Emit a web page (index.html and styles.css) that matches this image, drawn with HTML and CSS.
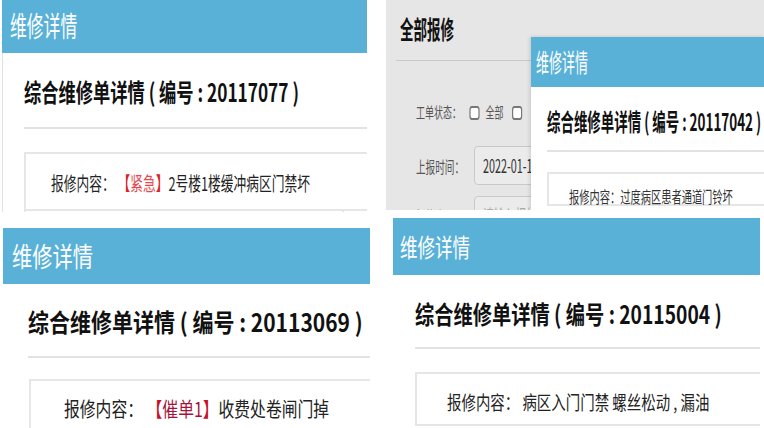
FILE: index.html
```html
<!DOCTYPE html>
<html lang="zh-CN">
<head>
    <meta charset="UTF-8">
    <title>维修详情</title>
    <link rel="stylesheet" href="styles.css">
</head>
<body>
    <div class="collage">
        <!-- top left -->
        <section class="shot shot-a">
            <header class="shot-head"><span class="sq">维修详情</span></header>
            <div class="shot-body">
                <h2 class="order-title"><span class="sq">综合维修单详情 ( 编号 : 20117077 )</span></h2>
                <div class="detail-box">
                    <div class="detail-row"><span class="sq">报修内容： <span class="tag">【<b>紧急</b>】</span>2号楼1楼缓冲病区门禁坏</span></div>
                    <div class="detail-row split"><div class="cell"></div></div>
                </div>
            </div>
        </section>

        <!-- top right -->
        <section class="shot shot-b">
            <h2 class="list-title"><span class="sq">全部报修</span></h2>
            <div class="filters">
                <div class="filter-row">
                    <span class="sq">工单状态：<i class="check"></i>全部<i class="check"></i></span>
                </div>
                <div class="filter-row">
                    <span class="filter-label"><span class="sq">上报时间：</span></span>
                    <div class="field"><span class="sq">2022-01-1</span></div>
                </div>
                <div class="filter-row">
                    <span class="filter-label"><span class="sq">报修人：</span></span>
                    <div class="field"><span class="sq faint">请输入报修人</span></div>
                </div>
            </div>

            <div class="dialog">
                <header class="shot-head"><span class="sq">维修详情</span></header>
                <div class="shot-body">
                    <h2 class="order-title"><span class="sq">综合维修单详情 ( 编号 : 20117042 )</span></h2>
                    <div class="detail-box">
                        <div class="detail-row"><span class="sq">报修内容：过度病区患者通道门铃坏</span></div>
                    </div>
                </div>
            </div>
        </section>

        <!-- bottom left -->
        <section class="shot shot-c">
            <header class="shot-head"><span class="sq">维修详情</span></header>
            <div class="shot-body">
                <h2 class="order-title"><span class="sq">综合维修单详情 ( 编号 : 20113069 )</span></h2>
                <div class="detail-box">
                    <div class="detail-row"><span class="sq">报修内容： <span class="tag">【<b>催单1</b>】</span>收费处卷闸门掉</span></div>
                </div>
            </div>
        </section>

        <!-- bottom right -->
        <section class="shot shot-d">
            <header class="shot-head"><span class="sq">维修详情</span></header>
            <div class="shot-body">
                <h2 class="order-title"><span class="sq">综合维修单详情 ( 编号 : 20115004 )</span></h2>
                <div class="detail-box">
                    <div class="detail-row"><span class="sq">报修内容： 病区入门门禁 螺丝松动 , 漏油</span></div>
                </div>
            </div>
        </section>
    </div>
</body>
</html>
```

FILE: styles.css
```css
body {
    margin: 0;
    background-color: #fff;
    font-family: "Noto Sans CJK SC", "Noto Sans", sans-serif;
    color: #222;
}

.collage {
    display: grid;
    grid-template-columns: 386px 378px;
    grid-template-rows: 218px 210px;
    width: 764px;
    height: 428px;
    overflow: hidden;
}

/* the screenshots are squashed sideways, so text is squeezed too */
.sq {
    display: inline-block;
    white-space: nowrap;
    transform: scaleX(var(--sx, 1));
    transform-origin: 0 50%;
}

.shot {
    position: relative;
    overflow: hidden;
    background-color: #fff;
}

.shot-head {
    background-color: #5ab1d8;
    color: #fff;
    line-height: 1;
    box-sizing: border-box;
}

.shot-body {
    box-sizing: border-box;
}

.order-title {
    margin: 0;
    line-height: 1;
    font-weight: bold;
    color: #111;
    border-bottom: 2px solid #e2e2e2;
}

.detail-box {
    border: 2px solid #e6e6e6;
    border-right: none;
}

.detail-row {
    line-height: 1;
}

.tag {
    color: #d8232a;
}

.tag b {
    font-weight: normal;
    color: #e5484d;
}

/* top left */
.shot-a {
    width: 365px;
    height: 212px;
    margin-left: 2px;
}

.shot-a .shot-head {
    height: 53px;
    padding: 11px 0 0 8px;
    font-size: 28px;
    --sx: 0.6;
}

.shot-a .shot-body {
    height: 159px;
    padding: 26px 0 0 21px;
    border-left: 1px solid #e2e2e2;
    --sx: 0.67;
}

.shot-a .order-title {
    font-size: 25px;
    padding-bottom: 23px;
    --sx: 0.69;
}

.shot-a .detail-box {
    margin-top: 23px;
}

.shot-a .detail-row {
    height: 55px;
    box-sizing: border-box;
    padding: 19px 0 0 25px;
    font-size: 19px;
}

.shot-a .split {
    height: 20px;
    padding: 0;
    border-top: 2px solid #e6e6e6;
}

.shot-a .split .cell {
    width: 316px;
    height: 100%;
    border-right: 2px solid #e6e6e6;
}

/* top right: list page with dialog on top */
.shot-b {
    width: 378px;
    height: 210px;
    background-color: #e6e6e6;
    --sx: 0.54;
}

.list-title {
    margin: 0 0 0 10px;
    padding: 16px 0 19px 4px;
    font-size: 25px;
    line-height: 1;
    color: #111;
    border-bottom: 1px solid #c9c9c9;
}

.filters {
    margin-top: 41px;
    padding-left: 30px;
    color: #555;
    font-size: 15px;
    --sx: 0.6;
}

.filter-row {
    display: flex;
    align-items: center;
    height: 20px;
    line-height: 1;
}

.filter-row + .filter-row {
    height: 39px;
    margin-top: 24px;
}

.filter-row + .filter-row + .filter-row {
    margin-top: 11px;
}

.filter-label {
    width: 58px;
    font-size: 16px;
}

.check {
    display: inline-block;
    width: 17px;
    height: 14px;
    margin: 0 10px 0 14px;
    vertical-align: -2px;
    border: 2px solid #777;
    border-radius: 4px;
    box-sizing: border-box;
    background-color: #fff;
}

.field {
    width: 200px;
    height: 39px;
    box-sizing: border-box;
    padding: 9px 0 0 8px;
    border: 1px solid #c9c9c9;
    border-radius: 4px;
    background-color: #ebebeb;
    font-size: 18px;
    color: #333;
}

.faint {
    color: #aaa;
}

.dialog {
    position: absolute;
    left: 145px;
    top: 37px;
    right: 0;
    bottom: 0;
    background-color: #fff;
    box-shadow: -1px 0 4px rgba(0, 0, 0, 0.15);
}

.dialog .shot-head {
    height: 50px;
    padding: 12px 0 0 5px;
    font-size: 25px;
    --sx: 0.52;
}

.dialog .shot-body {
    padding: 22px 0 0 16px;
}

.dialog .order-title {
    font-size: 24px;
    padding-bottom: 17px;
    --sx: 0.56;
}

.dialog .detail-box {
    margin-top: 20px;
}

.dialog .detail-row {
    padding: 14px 0 0 20px;
    font-size: 16px;
    color: #333;
    --sx: 0.64;
}

/* bottom left */
.shot-c {
    width: 367px;
    height: 200px;
    margin: 10px 0 0 3px;
}

.shot-c .shot-head {
    height: 56px;
    padding: 14px 0 0 9px;
    font-size: 27px;
    --sx: 0.75;
}

.shot-c .shot-body {
    padding: 25px 0 0 26px;
}

.shot-c .order-title {
    font-size: 25px;
    padding-bottom: 22px;
    margin-left: -1px;
    --sx: 0.84;
}

.shot-c .detail-box {
    margin-top: 21px;
    height: 60px;
}

.shot-c .detail-row {
    padding: 18px 0 0 33px;
    font-size: 20px;
    --sx: 0.79;
}

.shot-c .tag {
    color: #c8102a;
}

.shot-c .tag b {
    color: #a3123c;
}

/* bottom right */
.shot-d {
    width: 367px;
    height: 210px;
    margin-left: 7px;
}

.shot-d .shot-head {
    height: 57px;
    padding: 16px 0 0 7px;
    font-size: 25px;
    --sx: 0.7;
}

.shot-d .shot-body {
    padding: 26px 0 0 22px;
}

.shot-d .order-title {
    font-size: 25px;
    padding-bottom: 21px;
    --sx: 0.77;
}

.shot-d .detail-box {
    margin-top: 23px;
    height: 50px;
}

.shot-d .detail-row {
    padding: 18px 0 0 30px;
    font-size: 19px;
    --sx: 0.76;
}
```
